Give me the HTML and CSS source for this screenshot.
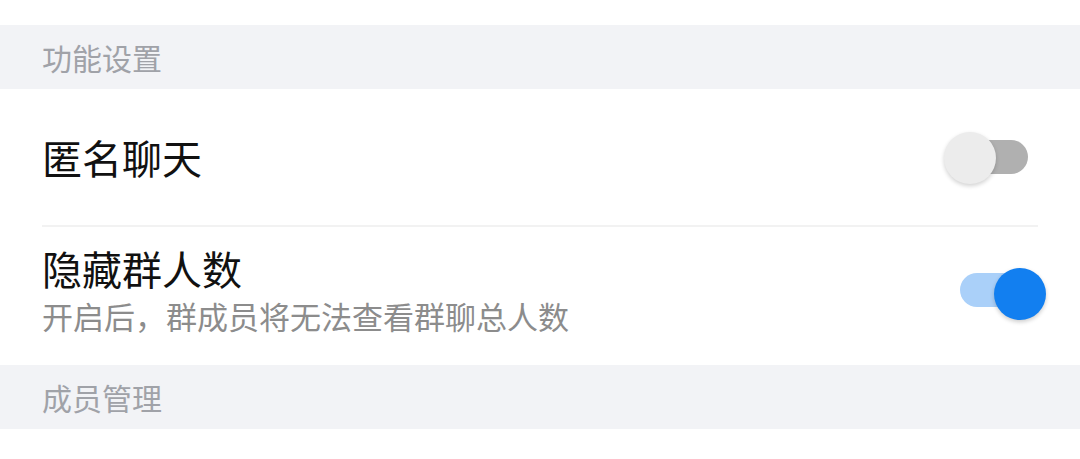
FILE: index.html
```html
<!DOCTYPE html>
<html lang="zh-CN">
<head>
<meta charset="utf-8">
<title>群设置</title>
<link rel="stylesheet" href="styles.css">
</head>
<body>
<div class="page">
  <div class="top-gap"></div>
  <div class="section-title">功能设置</div>
  <div class="list">
    <div class="item item-single">
      <div class="item-text">
        <div class="item-title">匿名聊天</div>
      </div>
      <div class="switch">
        <div class="switch-track"></div>
        <div class="switch-knob"></div>
      </div>
    </div>
    <div class="item item-double">
      <div class="item-text">
        <div class="item-title">隐藏群人数</div>
        <div class="item-desc">开启后，群成员将无法查看群聊总人数</div>
      </div>
      <div class="switch switch-on">
        <div class="switch-track"></div>
        <div class="switch-knob"></div>
      </div>
    </div>
  </div>
  <div class="section-title">成员管理</div>
</div>
</body>
</html>
```

FILE: styles.css
```css
html, body {
  margin: 0;
  padding: 0;
  background: #ffffff;
}

body {
  font-family: "Noto Sans CJK SC", "Noto Sans", sans-serif;
  width: 1080px;
  height: 459px;
  overflow: hidden;
}

.top-gap {
  height: 25px;
}

.section-title {
  height: 64px;
  background: #f2f3f6;
  color: #a0a2a8;
  font-size: 30px;
  line-height: 64px;
  padding-left: 42px;
}

.list {
  background: #ffffff;
}

.item {
  margin: 0 42px;
  display: flex;
  align-items: center;
  justify-content: space-between;
}

.item-single {
  height: 136px;
  border-bottom: 2px solid #f2f2f2;
}

.item-double {
  height: 138px;
  box-sizing: border-box;
  padding: 17px 0 29px;
}

.item-text {
  display: flex;
  flex-direction: column;
  gap: 4px;
}

.item-title {
  font-size: 40px;
  line-height: 48px;
  color: #111111;
}

.item-desc {
  font-size: 31px;
  line-height: 40px;
  color: #8c8c8c;
}

.switch {
  position: relative;
  width: 68px;
  height: 34px;
  margin-right: 10px;
}

.switch-track {
  width: 100%;
  height: 100%;
  border-radius: 17px;
  background: #b0b0b0;
}

.switch-knob {
  position: absolute;
  top: 50%;
  left: -16px;
  width: 52px;
  height: 52px;
  margin-top: -25px;
  border-radius: 50%;
  background: #ececec;
  box-shadow: 0 2px 4px rgba(0, 0, 0, 0.18);
}

.switch-on .switch-track {
  background: #aad0f9;
}

.switch-on .switch-knob {
  left: auto;
  right: -18px;
  margin-top: -22px;
  background: #127ff0;
  box-shadow: 0 2px 4px rgba(0, 0, 0, 0.2);
}
```
